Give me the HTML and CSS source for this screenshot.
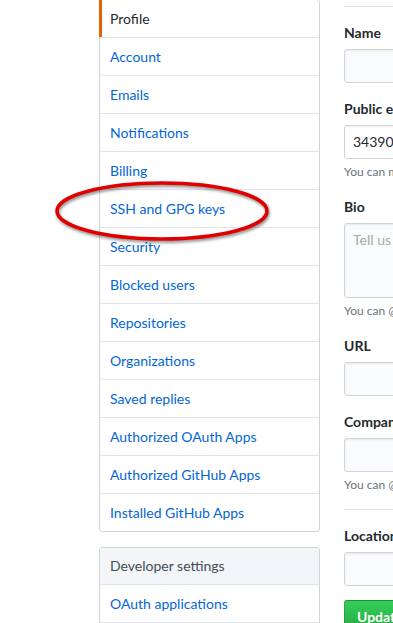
FILE: index.html
```html
<!DOCTYPE html>
<html lang="en">
<head>
    <meta charset="UTF-8">
    <meta name="viewport" content="width=device-width, initial-scale=1.0">
    <title>Settings</title>
    <link rel="stylesheet" href="styles.css">
</head>
<body>
    <div class="page">
        <div class="sidebar">
            <nav class="menu">
                <a class="menu-item selected" href="#">Profile</a>
                <a class="menu-item" href="#">Account</a>
                <a class="menu-item" href="#">Emails</a>
                <a class="menu-item" href="#">Notifications</a>
                <a class="menu-item" href="#">Billing</a>
                <a class="menu-item" href="#">SSH and GPG keys</a>
                <a class="menu-item" href="#">Security</a>
                <a class="menu-item" href="#">Blocked users</a>
                <a class="menu-item" href="#">Repositories</a>
                <a class="menu-item" href="#">Organizations</a>
                <a class="menu-item" href="#">Saved replies</a>
                <a class="menu-item" href="#">Authorized OAuth Apps</a>
                <a class="menu-item" href="#">Authorized GitHub Apps</a>
                <a class="menu-item" href="#">Installed GitHub Apps</a>
            </nav>

            <nav class="menu">
                <div class="menu-heading">Developer settings</div>
                <a class="menu-item" href="#">OAuth applications</a>
                <a class="menu-item" href="#">GitHub Apps</a>
            </nav>
        </div>

        <form class="profile-form">
            <hr class="divider">

            <dl class="form-group">
                <dt><label>Name</label></dt>
                <dd><input class="form-control" type="text"></dd>
            </dl>

            <dl class="form-group">
                <dt><label>Public email</label></dt>
                <dd>
                    <div class="form-control select">3439066@qq.com</div>
                    <p class="note">You can manage verified email addresses in your email settings.</p>
                </dd>
            </dl>

            <dl class="form-group">
                <dt><label>Bio</label></dt>
                <dd>
                    <textarea class="form-control bio" placeholder="Tell us a little bit about yourself"></textarea>
                    <p class="note">You can <strong>@mention</strong> other users and organizations to link to them.</p>
                </dd>
            </dl>

            <dl class="form-group">
                <dt><label>URL</label></dt>
                <dd><input class="form-control" type="text"></dd>
            </dl>

            <dl class="form-group">
                <dt><label>Company</label></dt>
                <dd>
                    <input class="form-control" type="text">
                    <p class="note">You can <strong>@mention</strong> your company's GitHub organization to link it.</p>
                </dd>
            </dl>

            <hr class="divider">

            <dl class="form-group">
                <dt><label>Location</label></dt>
                <dd><input class="form-control" type="text"></dd>
            </dl>

            <button class="btn-primary" type="button">Update profile</button>
        </form>
    </div>

    <!-- hand-drawn annotation -->
    <svg class="annotation" width="393" height="623" viewBox="0 0 393 623">
        <ellipse cx="162" cy="211" rx="105" ry="28" fill="none" stroke="#e00000" stroke-width="3.5"/>
    </svg>
</body>
</html>
```

FILE: styles.css
```css
:root {
    --link: #0366d6;
    --text: #24292e;
    --muted: #586069;
    --border: #d1d5da;
    --line: #e1e4e8;
}

* {
    margin: 0;
    padding: 0;
    box-sizing: border-box;
}

body {
    font-family: Lato, 'Noto Sans', sans-serif;
    font-size: 14px;
    line-height: 1.5;
    color: var(--text);
    background: #fff;
    overflow: hidden;
}

.page {
    display: flex;
    gap: 24px;
    padding-left: 99px;
    margin-top: -1px;
    width: 800px;
}

.sidebar {
    width: 221px;
    flex-shrink: 0;
}

.menu {
    display: flex;
    flex-direction: column;
    border: 1px solid var(--border);
    border-radius: 3px;
    margin-bottom: 15px;
    background: #fff;
}

.menu-item {
    position: relative;
    display: block;
    padding: 8px 10px;
    line-height: 21px;
    color: var(--link);
    text-decoration: none;
    border-bottom: 1px solid var(--line);
}

.menu-item:last-child {
    border-bottom: none;
}

.menu-item.selected {
    color: var(--text);
}

.menu-item.selected::before {
    content: "";
    position: absolute;
    top: 0;
    bottom: 0;
    left: -1px;
    width: 3px;
    background: #e36209;
}

.menu-heading {
    padding: 8px 10px;
    line-height: 20px;
    color: #444d56;
    background: #f3f5f8;
    border-bottom: 1px solid var(--line);
}

.profile-form {
    width: 440px;
    padding-top: 7px;
}

.divider {
    border: none;
    border-top: 1px solid var(--line);
    height: 0;
}

.form-group {
    margin: 15px 0;
}

.form-group dt {
    margin-bottom: 6px;
}

.form-group label {
    font-weight: 700;
    line-height: 21px;
    display: block;
}

.form-group dd {
    margin: 0;
}

.form-control {
    display: block;
    width: 440px;
    height: 34px;
    padding: 6px 8px;
    font-family: inherit;
    font-size: 14px;
    line-height: 20px;
    color: var(--text);
    background: #fafbfc;
    border: 1px solid var(--border);
    border-radius: 3px;
    box-shadow: inset 0 1px 2px rgba(27, 31, 35, 0.075);
    outline: none;
}

.select {
    background: #fff;
}

.form-control.bio {
    height: 75px;
    resize: none;
}

.form-control::placeholder {
    color: #a3aab1;
}

.note {
    margin-top: 4px;
    font-size: 12px;
    line-height: 18px;
    color: #6a737d;
}

.note strong {
    font-weight: 400;
}

.btn-primary {
    margin-top: -1px;
    padding: 6px 12px;
    font-family: inherit;
    font-size: 14px;
    font-weight: 700;
    line-height: 20px;
    color: #fff;
    background: linear-gradient(-180deg, #34d058 0%, #28a745 90%);
    border: 1px solid rgba(27, 31, 35, 0.2);
    border-radius: 3px;
    cursor: pointer;
}

.annotation {
    position: absolute;
    top: 0;
    left: 0;
    pointer-events: none;
    filter: drop-shadow(1px 2px 1.5px rgba(0, 0, 0, 0.45));
}
```
